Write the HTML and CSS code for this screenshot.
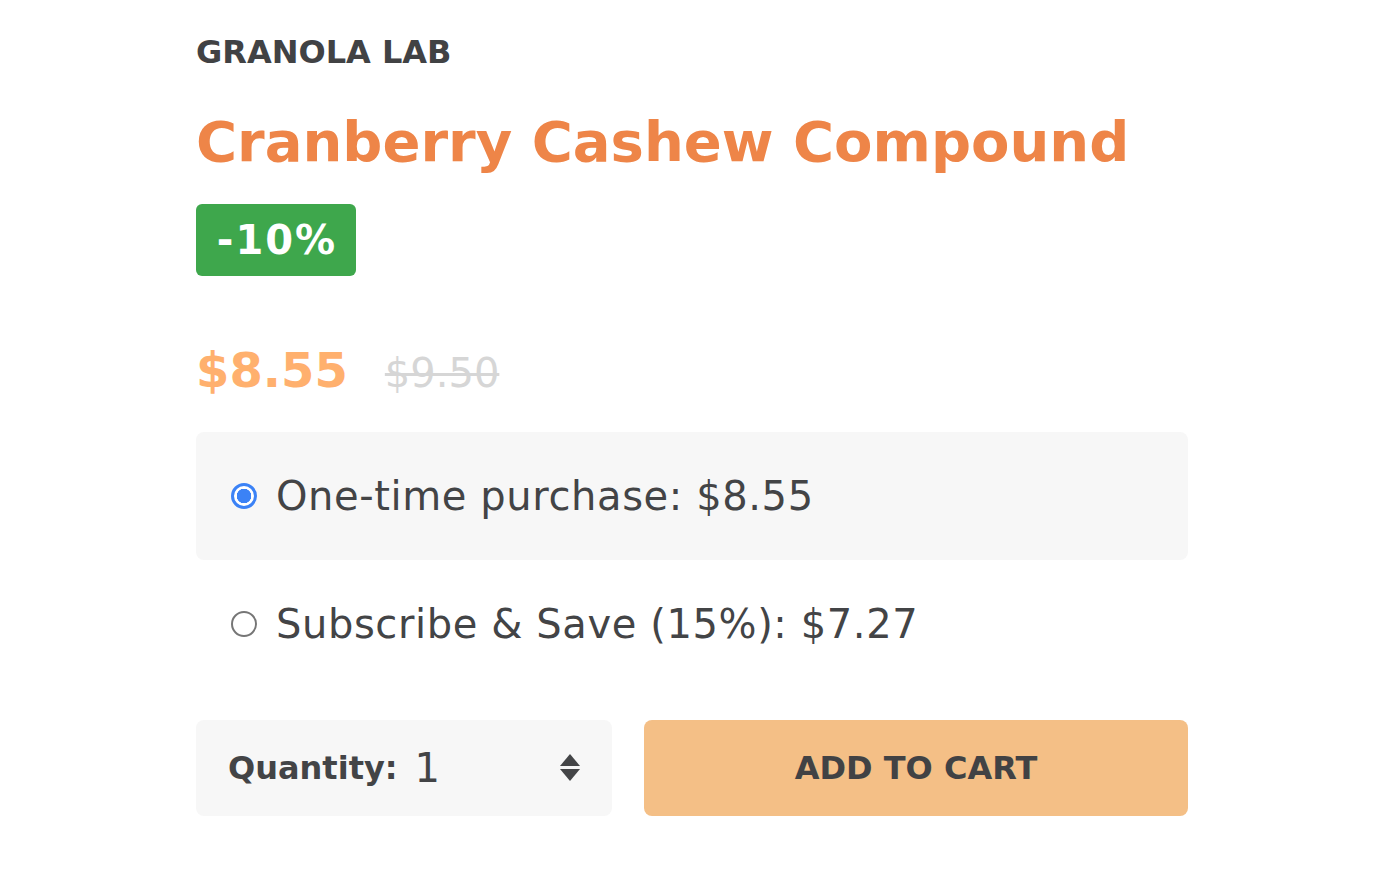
FILE: index.html
```html
<!DOCTYPE html>
<html lang="en">
<head>
<meta charset="utf-8">
<title>Cranberry Cashew Compound</title>
<link rel="stylesheet" href="styles.css">
</head>
<body>
<main class="page">
  <div class="brand">GRANOLA LAB</div>
  <h1 class="title">Cranberry Cashew Compound</h1>
  <div class="badge-row"><span class="badge">-10%</span></div>
  <div class="price-row">
    <span class="price">$8.55</span>
    <span class="old-price">$9.50</span>
  </div>
  <div class="options">
    <label class="option option-selected">
      <span class="radio radio-checked"></span>
      <span class="option-text">One-time purchase: $8.55</span>
    </label>
    <label class="option">
      <span class="radio"></span>
      <span class="option-text">Subscribe &amp; Save (15%): $7.27</span>
    </label>
  </div>
  <div class="actions">
    <div class="quantity">
      <span class="qty-label">Quantity:</span>
      <span class="qty-value">1</span>
      <svg class="qty-arrows" width="20" height="28" viewBox="0 0 20 28" aria-hidden="true">
        <path d="M10 0 L20 12 L0 12 Z" fill="#444547"/>
        <path d="M0 15 L20 15 L10 27 Z" fill="#444547"/>
      </svg>
    </div>
    <button class="add-to-cart" type="button">ADD TO CART</button>
  </div>
</main>
</body>
</html>
```

FILE: styles.css
```css
html, body {
  margin: 0;
  padding: 0;
  background: #ffffff;
}

body {
  font-family: "DejaVu Sans", Verdana, sans-serif;
  color: #434446;
}

.page {
  width: 992px;
  margin: 0 auto;
  padding: 28px 0 40px 8px;
}

.brand {
  font-size: 32px;
  line-height: 48px;
  font-weight: 700;
  color: #414244;
}

.title {
  margin: 30px 0 0;
  font-size: 56px;
  line-height: 72px;
  font-weight: 700;
  color: #ee8548;
}

.badge-row {
  display: flex;
  margin-top: 26px;
}

.badge {
  display: inline-flex;
  align-items: center;
  justify-content: center;
  box-sizing: border-box;
  width: 160px;
  height: 72px;
  padding-left: 2px;
  border-radius: 6px;
  background: #3ea74c;
  color: #ffffff;
  font-size: 40px;
  font-weight: 700;
  letter-spacing: 2px;
}

.price-row {
  display: flex;
  align-items: baseline;
  margin-top: 62px;
  line-height: 64px;
}

.price {
  font-size: 48px;
  font-weight: 700;
  color: #ffb06e;
}

.old-price {
  margin-left: 37px;
  font-size: 40px;
  color: #d6d6d6;
  text-decoration: line-through;
  text-decoration-thickness: 3px;
}

.options {
  margin-top: 27px;
  display: flex;
  flex-direction: column;
}

.option {
  display: flex;
  align-items: center;
  gap: 19px;
  padding: 32px 32px 32px 35px;
  border-radius: 8px;
  font-size: 40px;
  line-height: 64px;
  letter-spacing: 0.6px;
  color: #434446;
}

.option-selected {
  background: #f7f7f7;
}

.radio {
  flex: none;
  box-sizing: border-box;
  width: 26px;
  height: 26px;
  border-radius: 50%;
  border: 2px solid #767676;
  background: #ffffff;
}

.radio-checked {
  border: 3px solid #3b82f6;
  background: radial-gradient(circle, #3b82f6 0 7px, #ffffff 7.5px);
}

.actions {
  display: grid;
  grid-template-columns: 416px 1fr;
  gap: 32px;
  margin-top: 32px;
}

.quantity {
  display: flex;
  align-items: center;
  height: 96px;
  padding: 0 32px 0 32px;
  border-radius: 8px;
  background: #f7f7f7;
}

.qty-label {
  font-size: 32px;
  font-weight: 700;
  color: #434446;
}

.qty-value {
  margin-left: 17px;
  font-size: 40px;
  color: #434446;
  flex: 1;
}

.qty-arrows {
  display: block;
  flex: none;
}

.add-to-cart {
  height: 96px;
  border: 0;
  border-radius: 8px;
  background: #f4bf86;
  color: #414244;
  font-family: "DejaVu Sans", Verdana, sans-serif;
  font-size: 32px;
  font-weight: 700;
  cursor: pointer;
}
```
